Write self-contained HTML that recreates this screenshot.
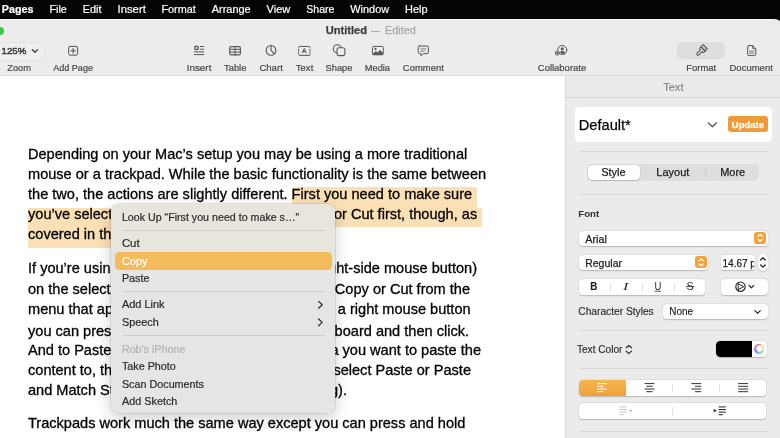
<!DOCTYPE html>
<html><head><meta charset="utf-8"><title>Pages</title>
<style>
*{box-sizing:border-box;margin:0;padding:0}
html,body{width:780px;height:438px;overflow:hidden;background:#060405}
body{position:relative;font-family:"Liberation Sans",sans-serif;color:#222}
.abs{position:absolute}
#win{position:absolute;left:-30px;top:19.2px;width:814px;height:440px;background:#ececec;border-radius:10px;border-top:1px solid #f9f9f9}
#doc{position:absolute;left:0;top:75.5px;width:565px;height:363px;background:#fff}
#side{position:absolute;left:565px;top:75.5px;width:215px;height:363px;background:#ebebeb;border-left:1px solid #d9d9d9}
.line{position:absolute;left:28px;white-space:nowrap;font-size:14.57px;line-height:20px;color:#000;height:20px;-webkit-text-stroke:.3px #000}
.line.sp{display:flex;justify-content:space-between}
.line.sp span{white-space:pre}
.hl{position:absolute;background:#fce0b5}
#menu{position:absolute;left:111.2px;top:204.4px;width:223.8px;height:208.6px;background:linear-gradient(to bottom,#e7e5dc 0,#e7e5dc 40px,#e6e5e3 50px);border-radius:7.5px;box-shadow:0 0 0 .6px rgba(0,0,0,.16),0 5px 16px rgba(0,0,0,.2);}
.sep{position:absolute;left:11.4px;width:202px;height:1px;background:rgba(0,0,0,.1)}
.sline{position:absolute;left:579px;width:189px;height:1px;background:#d8d8d8}
.ctl{position:absolute;background:#fff;border-radius:4px;box-shadow:0 0 0 .5px rgba(0,0,0,.05),0 .7px 1.3px rgba(0,0,0,.2)}
#ov{position:absolute;left:0;top:0;pointer-events:none;will-change:transform}
#txt{position:absolute;left:0;top:0;width:780px;height:438px;will-change:transform}
</style></head><body>
<div id="win"></div>
<div class="abs" style="left:-4px;top:27px;width:8px;height:8px;border-radius:50%;background:#3fc546"></div>
<!-- toolbar boxes -->
<div class="abs" style="left:-8px;top:42.5px;width:51.7px;height:17px;border-radius:5px;background:#efefef;box-shadow:0 0 0 .6px rgba(0,0,0,.07)"></div>
<div class="abs" style="left:676.7px;top:42px;width:48.6px;height:17px;border-radius:5px;background:#dedede"></div>
<div class="abs" style="left:0;top:74.6px;width:780px;height:1px;background:#dadada"></div>
<div id="doc"></div>
<div id="side"></div>

<!-- document text -->
<div class="hl" style="left:291.8px;top:187px;width:185px;height:20.6px"></div>
<div class="hl" style="left:28px;top:207.6px;width:454px;height:19.5px"></div>
<div class="hl" style="left:28px;top:227px;width:100px;height:20.6px"></div>
<div id="txt">
<div class="line" style="top:144.2px">Depending on your Mac’s setup you may be using a more traditional</div>
<div class="line" style="top:164.2px">mouse or a trackpad. While the basic functionality is the same between</div>
<div class="line" style="top:184.2px">the two, the actions are slightly different. First you need to make sure</div>
<div class="line sp" style="top:204.2px;width:449.2px"><span>you’ve selected the content you </span><span>want to Copy or Cut first, though, as</span></div>
<div class="line" style="top:224.2px">covered in the previous section.</div>
<div class="line sp" style="top:258px;width:449px"><span>If you’re using a mouse then </span><span>right-click (the right-side mouse button)</span></div>
<div class="line sp" style="top:279px;width:441.2px"><span>on the selected content and </span><span>then choose either Copy or Cut from the</span></div>
<div class="line sp" style="top:299px;width:442.6px"><span>menu that appears. If you’re </span><span>on a Mac without a right mouse button</span></div>
<div class="line sp" style="top:321px;width:441px"><span>you can press and hold the </span><span>Ctrl key on the keyboard and then click.</span></div>
<div class="line sp" style="top:339.6px;width:453px"><span>And to Paste right-click or </span><span>Control-click the area you want to paste the</span></div>
<div class="line sp" style="top:359.8px;width:443px"><span>content to, then from the </span><span>menu that appears, select Paste or Paste</span></div>
<div class="line sp" style="top:379.8px;width:319px"><span>and Match Style (to keep </span><span>the existing formatting).</span></div>
<div class="line" style="top:413.4px">Trackpads work much the same way except you can press and hold</div>

</div>
<!-- sidebar boxes -->
<div class="abs" style="left:566px;top:97px;width:214px;height:1px;background:#d6d6d6"></div>
<div class="abs" style="left:575.2px;top:106.5px;width:197px;height:35.8px;background:#fff;border-radius:4.5px"></div>
<div class="abs" style="left:727.5px;top:116.2px;width:40.6px;height:15.7px;border-radius:3px;background:#f09a38"></div>
<div class="sline" style="top:151px"></div>
<div class="abs" style="left:586.5px;top:164.2px;width:172.3px;height:17px;border-radius:5px;background:#dedede"></div>
<div class="ctl" style="left:587.6px;top:164.8px;width:52.4px;height:15.6px;border-radius:4.5px"></div>
<div class="abs" style="left:705.3px;top:168.5px;width:1px;height:8px;background:#cbcbcb"></div>
<div class="sline" style="top:194px"></div>
<div class="ctl" style="left:578.8px;top:231.1px;width:189.3px;height:14.7px"></div>
<div class="abs" style="left:754.1px;top:232px;width:12.1px;height:11.7px;border-radius:3px;background:#f2a33a"></div>
<div class="ctl" style="left:578.8px;top:254.6px;width:129.5px;height:15.2px"></div>
<div class="abs" style="left:694.9px;top:256.1px;width:12.2px;height:12.4px;border-radius:3px;background:#f2a33a"></div>
<div class="ctl" style="left:720.7px;top:255px;width:34.2px;height:14.8px;border-radius:2px"></div>
<div class="ctl" style="left:757.6px;top:254px;width:10.6px;height:16.8px;border-radius:5.3px"></div>
<div class="ctl" style="left:578.8px;top:279.3px;width:126.2px;height:15.4px"></div>
<div class="abs" style="left:610px;top:282.5px;width:1px;height:8.5px;background:#e4e4e4"></div>
<div class="abs" style="left:641.6px;top:282.5px;width:1px;height:8.5px;background:#e4e4e4"></div>
<div class="abs" style="left:673.7px;top:282.5px;width:1px;height:8.5px;background:#e4e4e4"></div>
<div class="ctl" style="left:720.7px;top:279px;width:47.4px;height:15.5px"></div>
<div class="ctl" style="left:663.4px;top:303.7px;width:104.7px;height:15.7px"></div>
<div class="sline" style="top:329.5px"></div>
<div class="ctl" style="left:716px;top:341px;width:51.3px;height:16.2px;border-radius:4.5px"></div>
<div class="abs" style="left:716px;top:341px;width:35.6px;height:16.2px;background:#000;border-radius:4.5px 0 0 4.5px"></div>
<div class="abs" style="left:753.9px;top:343.8px;width:10.2px;height:10.2px;border-radius:50%;background:conic-gradient(from 0deg,#f26a5a,#f5b955,#ecea62,#7bdc70,#5fd2e6,#6d86f3,#c06bee,#f3649f,#f26a5a)"></div>
<div class="abs" style="left:755.5px;top:345.4px;width:7px;height:7px;border-radius:50%;background:radial-gradient(#fff 52%,rgba(255,255,255,.35) 75%,rgba(255,255,255,0))"></div>
<div class="sline" style="top:368px"></div>
<div class="ctl" style="left:578.8px;top:379.8px;width:187.6px;height:16px"></div>
<div class="abs" style="left:578.8px;top:379.8px;width:47.4px;height:16px;background:linear-gradient(#f5b64e,#eea237);border-radius:4px 0 0 4px"></div>
<div class="abs" style="left:672.3px;top:383.5px;width:1px;height:8.5px;background:#e0e0e0"></div>
<div class="abs" style="left:719.2px;top:383.5px;width:1px;height:8.5px;background:#e0e0e0"></div>
<div class="ctl" style="left:578.8px;top:402.8px;width:187.6px;height:16.2px"></div>
<div class="abs" style="left:672.3px;top:406.5px;width:1px;height:8.5px;background:#e0e0e0"></div>
<div class="sline" style="top:431px"></div>

<!-- context menu -->
<div id="menu">
<div class="sep" style="top:25.2px"></div>
<div class="abs" style="left:4.2px;top:47.8px;width:216.2px;height:17.4px;border-radius:4.5px;background:#f3bb5a"></div>
<div class="sep" style="top:86.5px"></div>
<div class="sep" style="top:131px"></div>
</div>

<svg id="ov" width="780" height="438" viewBox="0 0 780 438" font-family="Liberation Sans, sans-serif">
<defs><clipPath id="szclip"><rect x="721" y="255" width="33.2" height="15"/></clipPath></defs>
<g fill="none" stroke="#555" stroke-width="1" stroke-linecap="round" stroke-linejoin="round">
<!-- zoom chevron -->
<polyline points="32.4,49.7 34.9,52.2 37.4,49.7" stroke="#444" stroke-width="1.4"/>
<!-- add page -->
<rect x="68.6" y="46.4" width="9" height="8.8" rx="1.6"/>
<path d="M73.1 48.4v4.8M70.7 50.8h4.8"/>
<!-- insert -->
<circle cx="196.5" cy="47.9" r="1.75" stroke-width="1.4"/>
<path d="M200.3 46.5h3.5M200.3 49.2h3.5M194.3 51.9h9.5M194.3 54.6h9.5" stroke-width="1"/>
<!-- table -->
<rect x="229.7" y="46.6" width="10.7" height="8.3" rx="1.4" stroke-width="1.1"/>
<path d="M235.1 46.6v8.3M229.7 49.3h10.7M229.7 52.1h10.7" stroke-width="1"/>
<!-- chart -->
<circle cx="271" cy="50.4" r="4.85" stroke-width="1.1"/>
<path d="M271 45.8v4.6l3.3 3.3" stroke-width="1.1"/>
<!-- text -->
<path d="M298.6 47.6v-.2a1 1 0 0 1 1-1h9.2a1 1 0 0 1 1 1v.2M310 54.2v.2a1 1 0 0 1-1 1h-9.4a1 1 0 0 1-1-1v-.2" stroke-width="1"/>
<path d="M298.6 49.2v1.2M298.6 51.8v1.2M310 49.2v1.2M310 51.8v1.2" stroke-width="1"/>
<path d="M302.5 52.9l1.8-4.5 1.8 4.5M303.1 51.5h2.4" stroke-width="1"/>
<!-- shape -->
<circle cx="337.3" cy="48.7" r="4" stroke-width="1.05"/>
<rect x="337" y="47.7" width="7.9" height="7.9" rx="2" fill="#ececec" stroke-width="1.05"/>
<!-- media -->
<rect x="372.5" y="46.4" width="10.8" height="8.4" rx="1.2"/>
<path d="M372.8 54.2l3-3 1.8 1.6 2.4-2.6 3 3.2v1H372.8z" fill="#555" stroke-width=".5"/>
<circle cx="375.5" cy="48.9" r="1.1" fill="#555" stroke="none"/>
<!-- comment -->
<path d="M419.6 46h7.4a1.4 1.4 0 0 1 1.4 1.4v4.8a1.4 1.4 0 0 1-1.4 1.4h-3.6l-2.4 2.2v-2.2h-1.4a1.4 1.4 0 0 1-1.4-1.4v-4.8a1.4 1.4 0 0 1 1.4-1.4z"/>
<path d="M420.8 48.4h5M420.8 50h5M420.8 51.5h3.4" stroke="#8c8c8c" stroke-width=".8"/>
<!-- collaborate -->
<circle cx="562.3" cy="50" r="4.5"/>
<circle cx="562.2" cy="48.7" r="1.5" fill="#555" stroke="none"/>
<path d="M559.6 53.6a2.7 2.7 0 0 1 5.4 0z" fill="#555" stroke-width=".4"/>
<circle cx="557.4" cy="53" r="3.1" fill="#ececec" stroke="none"/>
<circle cx="557.4" cy="53" r="2.1" stroke-width=".9"/>
<path d="M557.4 51.9v2.2M556.3 53h2.2" stroke-width=".8"/>
<!-- format brush -->
<g transform="translate(701.3 50.7) rotate(45)">
<path d="M-2.9 -5.6h5.8v3.2h-5.8z"/>
<path d="M-2.9 -2.4h5.8v1.5a1 1 0 0 1-1 1h-0.7v4.6a1.2 1.2 0 0 1-2.4 0v-4.6h-0.7a1 1 0 0 1-1-1z"/>
<path d="M-.6 -5.6v1.4M1.2 -5.6v1.8" stroke-width=".7"/>
</g>
<!-- document -->
<path d="M748.9 45.6h3.8l3.1 3.1v5.7a1.2 1.2 0 0 1-1.2 1.2h-5.7a1.2 1.2 0 0 1-1.2-1.2v-7.6a1.2 1.2 0 0 1 1.2-1.2z"/>
<path d="M752.6 45.8v2.1a.9.9 0 0 0 .9.9h2.1"/>
<path d="M749.7 51.2h4.2M749.7 53.2h4.2" stroke-width=".8"/>

<!-- sidebar: default chevron -->
<polyline points="708.5,122.9 712.4,126.7 716.3,122.9" stroke="#606060" stroke-width="1.45"/>
<!-- orange steppers -->
<g stroke="#fff" stroke-width="1.2">
<polyline points="757.9,236.4 760.1,234.3 762.3,236.4"/><polyline points="757.9,239.3 760.1,241.4 762.3,239.3"/>
<polyline points="698.8,260.9 701,258.8 703.2,260.9"/><polyline points="698.8,263.8 701,265.9 703.2,263.8"/>
</g>
<!-- size stepper -->
<g stroke="#2a2a2a" stroke-width="1.35">
<polyline points="760.6,260 762.9,257.8 765.2,260"/><polyline points="760.6,264.9 762.9,267.1 765.2,264.9"/>
</g>
<!-- gear-ish button -->
<circle cx="740.5" cy="286.7" r="4.7" stroke="#2a2a2a" stroke-width="1.15"/>
<path d="M738.2 282.7v8M738.4 283.9l5.4 2.8-5.4 2.8" stroke="#2a2a2a" stroke-width="1"/>
<polyline points="749,285.5 751.3,287.8 753.6,285.5" stroke="#2a2a2a" stroke-width="1.2"/>
<!-- none chevron -->
<polyline points="754.9,310.6 757.6,313.4 760.3,310.6" stroke="#2a2a2a" stroke-width="1.2"/>
<!-- text color updown -->
<g stroke="#333" stroke-width="1.2">
<polyline points="626.2,347.8 628.8,345.4 631.4,347.8"/><polyline points="626.2,351.2 628.8,353.6 631.4,351.2"/>
</g>
<!-- align icons -->
<g stroke="#fff" stroke-width="1" stroke-linecap="butt">
<path d="M597.2 383.6h9.8M597.2 386.3h6.2M597.2 389h9.8M597.2 391.7h6.2"/>
</g>
<g stroke="#333" stroke-width="1" stroke-linecap="butt">
<path d="M644.6 383.6h9.8M646.4 386.3h6.2M644.6 389h9.8M646.4 391.7h6.2"/>
<path d="M691.4 383.6h9.8M695 386.3h6.2M691.4 389h9.8M695 391.7h6.2"/>
<path d="M738.2 383.6h9.8M738.2 386.3h9.8M738.2 389h9.8M738.2 391.7h9.8"/>
</g>
<!-- indent icons -->
<g stroke="#c4c4c4" stroke-width="1" stroke-linecap="butt">
<path d="M619.4 406.9h7.4M619.4 409.5h7.4M619.4 412.1h7.4M619.4 414.7h4.2"/>
<path d="M631.6 408.9v3.6l-3-1.8z" fill="#c4c4c4" stroke="none"/>
</g>
<g stroke="#222" stroke-width="1" stroke-linecap="butt">
<path d="M718.6 406.9h7.2M718.6 409.5h7.2M718.6 412.1h7.2M718.6 414.7h4.2"/>
<path d="M713.7 408.9v3.6l3-1.8z" fill="#222" stroke="none"/>
</g>
<!-- menu chevrons -->
<g stroke="#2a2a2a" stroke-width="1.2">
<polyline points="318.6,301.4 322.2,304.8 318.6,308.2"/>
<polyline points="318.6,319 322.2,322.4 318.6,325.8"/>
</g>
</g>

<text x="1.8" y="13.1" font-size="10.8" fill="#fff" font-weight="bold" textLength="31.7" lengthAdjust="spacingAndGlyphs" stroke="#fff" stroke-width="0.2">Pages</text>
<text x="49.5" y="13.1" font-size="10.8" fill="#fff" textLength="17.3" lengthAdjust="spacingAndGlyphs" stroke="#fff" stroke-width="0.2">File</text>
<text x="82.7" y="13.1" font-size="10.8" fill="#fff" textLength="18.8" lengthAdjust="spacingAndGlyphs" stroke="#fff" stroke-width="0.2">Edit</text>
<text x="117.5" y="13.1" font-size="10.8" fill="#fff" textLength="28.3" lengthAdjust="spacingAndGlyphs" stroke="#fff" stroke-width="0.2">Insert</text>
<text x="161.5" y="13.1" font-size="10.8" fill="#fff" textLength="34.2" lengthAdjust="spacingAndGlyphs" stroke="#fff" stroke-width="0.2">Format</text>
<text x="211.8" y="13.1" font-size="10.8" fill="#fff" textLength="38.9" lengthAdjust="spacingAndGlyphs" stroke="#fff" stroke-width="0.2">Arrange</text>
<text x="266.5" y="13.1" font-size="10.8" fill="#fff" textLength="23.8" lengthAdjust="spacingAndGlyphs" stroke="#fff" stroke-width="0.2">View</text>
<text x="306.3" y="13.1" font-size="10.8" fill="#fff" textLength="28.0" lengthAdjust="spacingAndGlyphs" stroke="#fff" stroke-width="0.2">Share</text>
<text x="350.3" y="13.1" font-size="10.8" fill="#fff" textLength="38.8" lengthAdjust="spacingAndGlyphs" stroke="#fff" stroke-width="0.2">Window</text>
<text x="405.0" y="13.1" font-size="10.8" fill="#fff" textLength="22.5" lengthAdjust="spacingAndGlyphs" stroke="#fff" stroke-width="0.2">Help</text>
<text x="325.7" y="34.3" font-size="10.8" fill="#3c3c3c" font-weight="bold" textLength="41.3" lengthAdjust="spacingAndGlyphs" stroke="#3c3c3c" stroke-width="0.25">Untitled</text>
<text x="370.9" y="34.3" font-size="10.8" fill="#a8a8a8" textLength="9.0" lengthAdjust="spacingAndGlyphs" stroke="#a8a8a8" stroke-width="0.25">—</text>
<text x="385.0" y="34.3" font-size="10.8" fill="#a8a8a8" textLength="30.9" lengthAdjust="spacingAndGlyphs" stroke="#a8a8a8" stroke-width="0.25">Edited</text>
<text x="7.3" y="70.7" font-size="9.2" fill="#484848" textLength="23.7" lengthAdjust="spacingAndGlyphs" stroke="#484848" stroke-width="0.2">Zoom</text>
<text x="53.2" y="70.7" font-size="9.2" fill="#484848" textLength="39.8" lengthAdjust="spacingAndGlyphs" stroke="#484848" stroke-width="0.2">Add Page</text>
<text x="186.7" y="70.7" font-size="9.2" fill="#484848" textLength="24.7" lengthAdjust="spacingAndGlyphs" stroke="#484848" stroke-width="0.2">Insert</text>
<text x="224.0" y="70.7" font-size="9.2" fill="#484848" textLength="22.4" lengthAdjust="spacingAndGlyphs" stroke="#484848" stroke-width="0.2">Table</text>
<text x="259.4" y="70.7" font-size="9.2" fill="#484848" textLength="23.4" lengthAdjust="spacingAndGlyphs" stroke="#484848" stroke-width="0.2">Chart</text>
<text x="295.8" y="70.7" font-size="9.2" fill="#484848" textLength="17.5" lengthAdjust="spacingAndGlyphs" stroke="#484848" stroke-width="0.2">Text</text>
<text x="325.6" y="70.7" font-size="9.2" fill="#484848" textLength="26.7" lengthAdjust="spacingAndGlyphs" stroke="#484848" stroke-width="0.2">Shape</text>
<text x="364.8" y="70.7" font-size="9.2" fill="#484848" textLength="25.2" lengthAdjust="spacingAndGlyphs" stroke="#484848" stroke-width="0.2">Media</text>
<text x="402.8" y="70.7" font-size="9.2" fill="#484848" textLength="41.0" lengthAdjust="spacingAndGlyphs" stroke="#484848" stroke-width="0.2">Comment</text>
<text x="537.8" y="70.7" font-size="9.2" fill="#484848" textLength="48.4" lengthAdjust="spacingAndGlyphs" stroke="#484848" stroke-width="0.2">Collaborate</text>
<text x="686.2" y="70.7" font-size="9.2" fill="#484848" textLength="30.0" lengthAdjust="spacingAndGlyphs" stroke="#484848" stroke-width="0.2">Format</text>
<text x="729.5" y="70.7" font-size="9.2" fill="#484848" textLength="43.3" lengthAdjust="spacingAndGlyphs" stroke="#484848" stroke-width="0.2">Document</text>
<text x="1.5" y="54" font-size="9" fill="#3a3a3a" textLength="24.8" lengthAdjust="spacingAndGlyphs" stroke="#3a3a3a" stroke-width="0.45">125%</text>
<text x="663.2" y="91" font-size="10.5" fill="#7c7c7c" textLength="20.3" lengthAdjust="spacingAndGlyphs" stroke="#7c7c7c" stroke-width="0.1">Text</text>
<text x="578.8" y="129.7" font-size="15.2" fill="#000" textLength="52.0" lengthAdjust="spacingAndGlyphs" stroke="#000" stroke-width="0.25">Default*</text>
<text x="731.8" y="127.6" font-size="9.2" fill="#fff" font-weight="bold" textLength="32.2" lengthAdjust="spacingAndGlyphs" stroke="#fff" stroke-width="0.25">Update</text>
<text x="601.2" y="175.8" font-size="10.6" fill="#1e1e1e" textLength="24.4" lengthAdjust="spacingAndGlyphs" stroke="#1e1e1e" stroke-width="0.25">Style</text>
<text x="656.3" y="175.8" font-size="10.6" fill="#1e1e1e" textLength="33.0" lengthAdjust="spacingAndGlyphs" stroke="#1e1e1e" stroke-width="0.25">Layout</text>
<text x="720.2" y="175.8" font-size="10.6" fill="#1e1e1e" textLength="25.0" lengthAdjust="spacingAndGlyphs" stroke="#1e1e1e" stroke-width="0.25">More</text>
<text x="578.3" y="216.8" font-size="9.8" fill="#303030" font-weight="bold" textLength="20.8" lengthAdjust="spacingAndGlyphs">Font</text>
<text x="585.2" y="242.5" font-size="10.6" fill="#1e1e1e" textLength="21.6" lengthAdjust="spacingAndGlyphs" stroke="#1e1e1e" stroke-width="0.25">Arial</text>
<text x="585.2" y="267" font-size="10.6" fill="#1e1e1e" textLength="36.8" lengthAdjust="spacingAndGlyphs" stroke="#1e1e1e" stroke-width="0.25">Regular</text>
<text x="722.5" y="267" font-size="10.8" fill="#1e1e1e" textLength="36.2" lengthAdjust="spacingAndGlyphs" clip-path="url(#szclip)" stroke="#1e1e1e" stroke-width="0.25">14.67 pt</text>
<text x="590.3" y="289.8" font-size="10.4" fill="#1e1e1e" font-weight="bold" textLength="7.1" lengthAdjust="spacingAndGlyphs" stroke="#1e1e1e" stroke-width="0.1">B</text>
<text x="623.1" y="289.8" font-size="10.2" fill="#2a2a2a" textLength="5.4" lengthAdjust="spacingAndGlyphs" font-style="italic" font-family="Liberation Serif, serif">I</text>
<text x="654.4" y="289.6" font-size="10.2" fill="#2a2a2a" textLength="6.9" lengthAdjust="spacingAndGlyphs">U</text>
<text x="686.5" y="289.8" font-size="10.2" fill="#2a2a2a" textLength="7.2" lengthAdjust="spacingAndGlyphs">S</text>
<path d="M654.6 291.2h6.5" stroke="#2a2a2a" stroke-width=".8"/>
<path d="M685.8 286.6h8.6" stroke="#2a2a2a" stroke-width=".8"/>
<text x="578.3" y="314.7" font-size="10.1" fill="#2a2a2a" textLength="75.4" lengthAdjust="spacingAndGlyphs" stroke="#2a2a2a" stroke-width="0.15">Character Styles</text>
<text x="669.2" y="314.7" font-size="10.3" fill="#1e1e1e" textLength="23.9" lengthAdjust="spacingAndGlyphs" stroke="#1e1e1e" stroke-width="0.15">None</text>
<text x="576.9" y="352.5" font-size="10.1" fill="#2a2a2a" textLength="45.6" lengthAdjust="spacingAndGlyphs" stroke="#2a2a2a" stroke-width="0.15">Text Color</text>
<text x="121.9" y="221.3" font-size="10.5" fill="#2a2a2a" textLength="177.3" lengthAdjust="spacingAndGlyphs" stroke="#2a2a2a" stroke-width="0.2">Look Up “First you need to make s…”</text>
<text x="121.9" y="247.2" font-size="10.5" fill="#2a2a2a" textLength="17.7" lengthAdjust="spacingAndGlyphs" stroke="#2a2a2a" stroke-width="0.2">Cut</text>
<text x="121.9" y="264.8" font-size="10.5" fill="#fff" textLength="25.7" lengthAdjust="spacingAndGlyphs" stroke="#fff" stroke-width="0.2">Copy</text>
<text x="121.9" y="282.2" font-size="10.5" fill="#2a2a2a" textLength="27.6" lengthAdjust="spacingAndGlyphs" stroke="#2a2a2a" stroke-width="0.2">Paste</text>
<text x="121.9" y="308.3" font-size="10.5" fill="#2a2a2a" textLength="42.7" lengthAdjust="spacingAndGlyphs" stroke="#2a2a2a" stroke-width="0.2">Add Link</text>
<text x="121.9" y="325.8" font-size="10.5" fill="#2a2a2a" textLength="36.9" lengthAdjust="spacingAndGlyphs" stroke="#2a2a2a" stroke-width="0.2">Speech</text>
<text x="121.9" y="352.5" font-size="10.5" fill="#b3b2b0" textLength="63.5" lengthAdjust="spacingAndGlyphs" stroke="#b3b2b0" stroke-width="0.2">Rob's iPhone</text>
<text x="121.9" y="370" font-size="10.5" fill="#2a2a2a" textLength="53.9" lengthAdjust="spacingAndGlyphs" stroke="#2a2a2a" stroke-width="0.2">Take Photo</text>
<text x="121.9" y="387.5" font-size="10.5" fill="#2a2a2a" textLength="82.1" lengthAdjust="spacingAndGlyphs" stroke="#2a2a2a" stroke-width="0.2">Scan Documents</text>
<text x="121.9" y="405" font-size="10.5" fill="#2a2a2a" textLength="55.5" lengthAdjust="spacingAndGlyphs" stroke="#2a2a2a" stroke-width="0.2">Add Sketch</text>
</svg>
</body></html>
